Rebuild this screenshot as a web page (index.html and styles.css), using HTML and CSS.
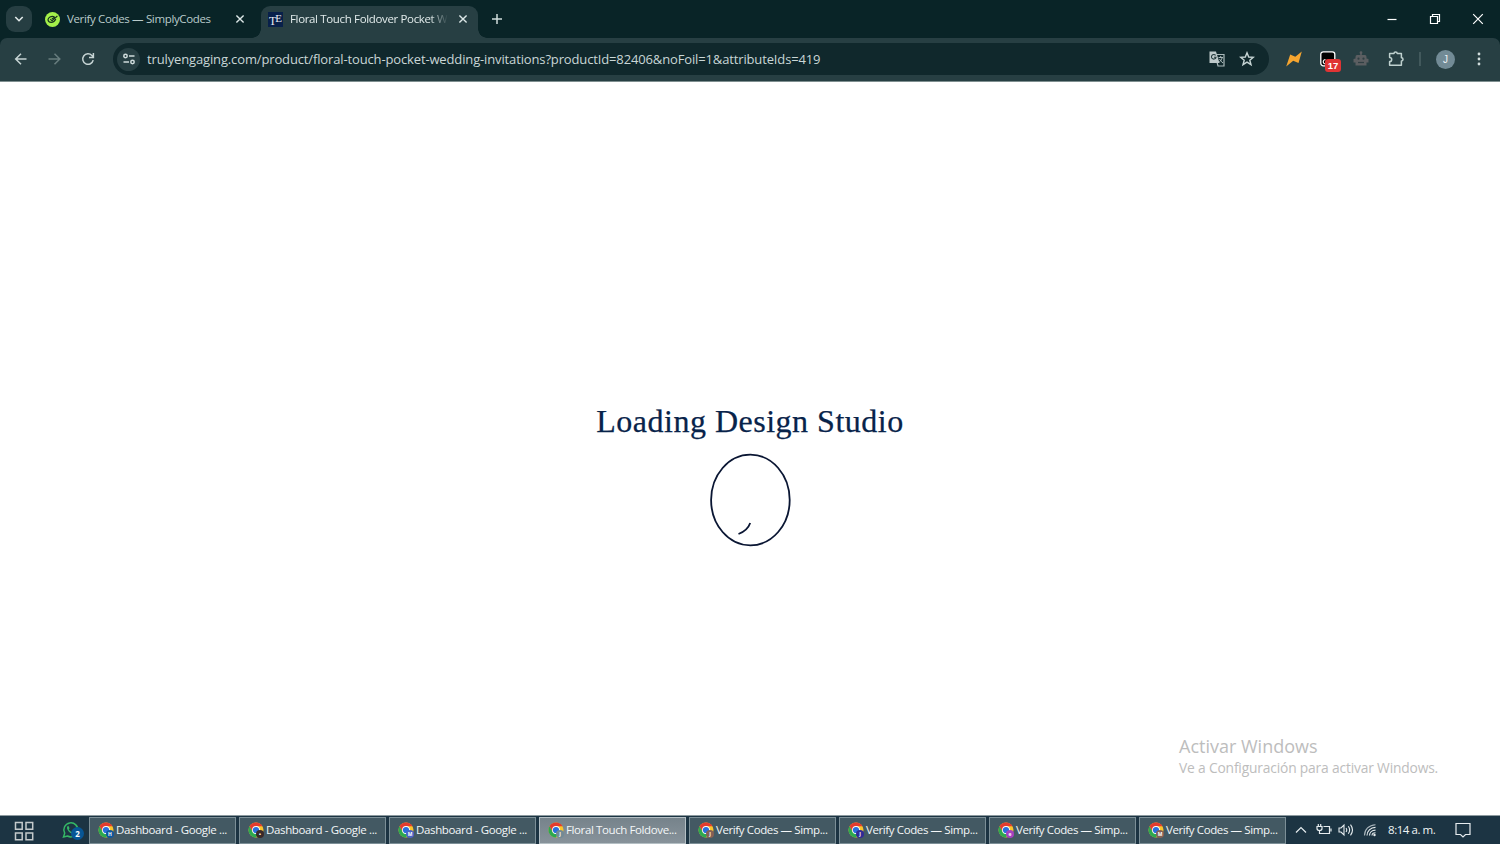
FILE: index.html
```html
<!DOCTYPE html>
<html lang="es">
<head>
<meta charset="utf-8">
<title>Floral Touch Foldover Pocket Wedding Invitations</title>
<link rel="stylesheet" href="styles.css">
</head>
<body>
<svg class="defs" aria-hidden="true">
  <symbol id="chrome" viewBox="0 0 16 16">
    <circle cx="8" cy="8" r="7.5" fill="#fbc52c"/>
    <path d="M1.5 4.2A7.5 7.5 0 0 1 14.5 4.2H8L4.7 9.9Z" fill="#e33b2e"/>
    <path d="M1.5 4.2A7.5 7.5 0 0 0 7.9 15.5L11.3 9.9H4.7Z" fill="#2da94f"/>
    <circle cx="8" cy="8" r="3.9" fill="#fff"/>
    <circle cx="8" cy="8" r="3.1" fill="#2b6fdc"/>
  </symbol>
  <symbol id="cross" viewBox="0 0 10 10"><path d="M1.4 1.4 8.6 8.6M8.6 1.4 1.4 8.6" fill="none" stroke="currentColor" stroke-width="1.4"/></symbol>
</svg>

<header class="tabstrip">
  <button class="tab-search"><svg width="10" height="10" viewBox="0 0 10 10"><path d="M1.300 3 5 6.700 8.700 3" fill="none" stroke="#e2eaea" stroke-width="1.600"/></svg></button>
  <div class="tab first">
    <svg class="favicon" viewBox="0 0 16 16"><circle cx="8" cy="8" r="8" fill="#a4f04a"/><path d="M10 5.100C6.500 4 3.300 5.800 3.200 8.300 3.300 11.700 9.500 12.300 11.500 7.500" fill="none" stroke="#17321e" stroke-width="1.300"/><path d="M5.700 7.500 7.500 9.400 13.200 4.300M7.300 7.400 10.500 5.300" fill="none" stroke="#17321e" stroke-width="1.200"/></svg>
    <span class="tab-title">Verify Codes — SimplyCodes</span>
    <svg class="tab-close"><use href="#cross"/></svg>
  </div>
  <div class="tab active">
    <span class="favicon te"><i>T</i><b>E</b></span>
    <span class="tab-title faded">Floral Touch Foldover Pocket We</span>
    <svg class="tab-close"><use href="#cross"/></svg>
  </div>
  <svg class="new-tab" viewBox="0 0 12 12"><path d="M6 1V11M1 6H11" stroke="#cfdcdc" stroke-width="1.500"/></svg>
  <div class="window-controls">
    <svg viewBox="0 0 12 12"><path d="M1.500 6.500H10.500" stroke="#fff" stroke-width="1.200"/></svg>
    <svg viewBox="0 0 12 12"><path d="M1.500 3.500H8.500V10.500H1.500ZM3.500 3.500V1.500H10.500V8.500H8.500" fill="none" stroke="#fff" stroke-width="1.200"/></svg>
    <svg viewBox="0 0 12 12"><path d="M1.200 1.200 10.800 10.800M10.800 1.200 1.200 10.800" stroke="#fff" stroke-width="1.200"/></svg>
  </div>
</header>

<div class="frame">
<nav class="toolbar">
  <div class="nav-buttons">
    <svg viewBox="0 0 16 16"><path d="M13.500 8H3M8 2.700 2.700 8 8 13.300" fill="none" stroke="#c6d4d4" stroke-width="1.500"/></svg>
    <svg viewBox="0 0 16 16"><path d="M1.500 8H12.500M7.500 2.700 12.800 8 7.500 13.300" fill="none" stroke="#687d7e" stroke-width="1.500"/></svg>
    <svg viewBox="0 0 16 16"><path d="M13.200 9.200A5.300 5.300 0 1 1 11.900 4.400L13.300 5.900M13.400 2V6.400H9" fill="none" stroke="#c6d4d4" stroke-width="1.500"/></svg>
  </div>
  <div class="omnibox">
    <span class="site-info"><svg viewBox="0 0 14 14"><g fill="none" stroke="#d0dcdc" stroke-width="1.500"><circle cx="3.500" cy="4" r="1.700"/><path d="M7 4H12.500M1.500 10H7"/><circle cx="10.500" cy="10" r="1.700"/></g></svg></span>
    <span class="url">trulyengaging.com/product/floral-touch-pocket-wedding-invitations?productId=82406&amp;noFoil=1&amp;attributeIds=419</span>
    <svg class="translate" viewBox="0 0 16 16"><path d="M6 3.500H15V15H9Z" fill="none" stroke="#aab9ba" stroke-width="1.200"/><path d="M.5.500H7L10.500 12H.5Z" fill="#bdc9ca"/><path d="M6.600 4.400A2.300 2.300 0 1 0 7 6.300H5" fill="none" stroke="#243a3d" stroke-width="1.100"/><path d="M9.500 6.500H14M11.700 5V6.500M13.200 6.700C12.500 9 11.500 10.200 10.300 11M10.500 8C11.500 9.700 12.500 11 14 12" fill="none" stroke="#aab9ba"/></svg>
    <svg class="star" viewBox="0 0 16 16"><path d="M8 1.800 9.700 6 14.300 6.300 10.800 9.200 12 13.700 8 11.200 4 13.700 5.200 9.200 1.700 6.300 6.300 6Z" fill="none" stroke="#c6d4d4" stroke-width="1.400"/></svg>
  </div>
  <div class="extensions">
    <svg viewBox="0 0 16 16"><path d="M.2 15.400 4.200 3.500 9.300 5.800 15.800.6 12.500 12 7.200 9.700Z" fill="#f6a52f"/></svg>
    <span class="ext-badge"><svg viewBox="0 0 16 16"><rect x=".8" y=".8" width="14" height="14" rx="2.500" fill="#000" stroke="#fff" stroke-width="1.300"/><path d="M5.500 8.500A2 2 0 1 0 5.500 13" fill="none" stroke="#fff" stroke-width="1.200"/></svg><b>17</b></span>
    <svg class="robot" viewBox="0 0 16 16"><path d="M7.200 1H8.800V4H12Q13.500 4 13.500 6V7.500L15.500 8V11.500H13.500V14.500H2.500V11.500H.5V8L2.500 7.500V6Q2.500 4 4 4H7.200Z" fill="#5b5e61"/><circle cx="8" cy="1.700" r="1.400" fill="#5b5e61"/><circle cx="5.500" cy="7.700" r="1.100" fill="#303f43"/><circle cx="10.500" cy="7.700" r="1.100" fill="#303f43"/><path d="M5 11.500H11" stroke="#303f43" stroke-width="1.200"/></svg>
    <svg viewBox="0 0 16 16"><path d="M1.600 2.500H6A1.600 1.600 0 0 1 9.200 2.500H13.400V6.700A1.600 1.600 0 0 1 13.400 9.900V14.200H1.600V10.600A2.100 2.100 0 0 0 1.600 6.400Z" fill="none" stroke="#bfd1cf" stroke-width="1.500" stroke-linejoin="round"/></svg>
    <span class="divider"></span>
    <span class="avatar">J</span>
    <svg class="menu" viewBox="0 0 4 16"><g fill="#d0dcdc"><circle cx="2" cy="3" r="1.400"/><circle cx="2" cy="8" r="1.400"/><circle cx="2" cy="13" r="1.400"/></g></svg>
  </div>
</nav>
</div>

<main class="page">
  <h1>Loading Design Studio</h1>
  <svg class="loader" viewBox="0 0 82 94"><ellipse cx="41.400" cy="47" rx="39.300" ry="45.300" fill="none" stroke="#0a1633" stroke-width="1.800"/><path d="M41.200 70C39.500 75 36 78.500 29.500 81" fill="none" stroke="#0a1633" stroke-width="1.800"/></svg>
  <aside class="activation"><p class="big">Activar Windows</p><p class="small">Ve a Configuración para activar Windows.</p></aside>
</main>

<footer class="taskbar">
  <svg class="start" viewBox="0 0 20 20"><g fill="none" stroke="#c4cacc" stroke-width="1.500"><path d="M1.500 1.500H8.200V8.200H1.500ZM12 1.500H18.700V8.200H12ZM1.500 12H8.200V18.700H1.500ZM12 12H18.700V18.700H12Z"/></g></svg>
  <span class="whatsapp"><svg viewBox="0 0 18 18"><path d="M1.500 16 2.700 12.200A7 7 0 1 1 5.500 15Z" fill="none" stroke="#35b866" stroke-width="1.500"/><path d="M6.300 4.800 7.600 7.200 6.800 8.200C7.500 9.700 8.500 10.500 10 11.100L11 10.200 13.200 11.300C12.700 13 11 13.200 9.500 12.500 7 11.500 5.500 9.300 5 7.300 4.900 6 5.500 5 6.300 4.800Z" fill="#35b866"/></svg><b>2</b></span>
  <div class="tasks">
    <div class="task"><span class="app"><svg><use href="#chrome"/></svg><i class="p-blue">H</i></span><span class="label dash">Dashboard - Google ...</span></div>
    <div class="task"><span class="app"><svg><use href="#chrome"/></svg><i class="p-dark">•</i></span><span class="label dash">Dashboard - Google ...</span></div>
    <div class="task"><span class="app"><svg><use href="#chrome"/></svg><i class="p-indigo">M</i></span><span class="label dash">Dashboard - Google ...</span></div>
    <div class="task current"><span class="app"><svg><use href="#chrome"/></svg><i class="p-slate">J</i></span><span class="label">Floral Touch Foldove...</span></div>
    <div class="task"><span class="app"><svg><use href="#chrome"/></svg><i class="p-brown">J</i></span><span class="label">Verify Codes — Simp...</span></div>
    <div class="task"><span class="app"><svg><use href="#chrome"/></svg><i class="p-navy">J</i></span><span class="label">Verify Codes — Simp...</span></div>
    <div class="task"><span class="app"><svg><use href="#chrome"/></svg><i class="p-purple">e</i></span><span class="label">Verify Codes — Simp...</span></div>
    <div class="task"><span class="app"><svg><use href="#chrome"/></svg><i class="p-brown">M</i></span><span class="label">Verify Codes — Simp...</span></div>
  </div>
  <div class="tray">
    <svg class="chev" viewBox="0 0 12 12"><path d="M1 8.500 6 3.500 11 8.500" fill="none" stroke="#e6ecef" stroke-width="1.200"/></svg>
    <svg class="battery" viewBox="0 0 16 14"><path d="M7.500 3.500H13.500V10.500H4.500M15 5.500V8.500M1 3.500H6V5.500Q6 7.500 3.500 7.500 1 7.500 1 5.500ZM2.300 1V3.500M4.700 1V3.500M3.500 7.500V10.500H5" fill="none" stroke="#e6ecef" stroke-width="1.200"/></svg>
    <svg class="volume" viewBox="0 0 16 14"><path d="M1 5H3L6 2V12L3 9H1ZM8 5Q9.500 7 8 9M10.300 3.300Q13 7 10.300 10.700M12.500 1.700Q16.500 7 12.500 12.300" fill="none" stroke="#e6ecef" stroke-width="1.100"/></svg>
    <svg class="wifi" viewBox="0 0 14 14"><g fill="none" stroke="#e6ecef" stroke-width="1.100"><path d="M1.500 12.500C1.500 6.500 6 2 12.500 1.700" opacity=".7"/><path d="M4 12.500C4 8 7.500 4.500 12.500 4.400M6.500 12.500C6.500 9.500 9 7.200 12.500 7.100M9 12.500C9 11 10.500 9.700 12.500 9.700"/></g><circle cx="11.500" cy="12" r="1.200" fill="#e6ecef"/></svg>
    <span class="clock">8:14 a. m.</span>
    <svg class="notice" viewBox="0 0 16 16"><path d="M1 1.500H15V12.500H10.500L8 15 5.500 12.500H1Z" fill="none" stroke="#e6ecef" stroke-width="1.200"/></svg>
  </div>
</footer>
</body>
</html>
```

FILE: styles.css
```css
* { box-sizing: border-box; }
body { margin: 0; width: 1500px; height: 844px; display: flex; flex-direction: column; overflow: hidden; background: #fff; font-family: "Open Sans", "Noto Sans", sans-serif; }
svg { display: block; flex: none; }
.defs { position: absolute; width: 0; height: 0; }

.tabstrip { height: 38px; flex: none; display: flex; align-items: flex-start; background: #092427; padding-left: 6px; }
.tab-search { width: 26px; height: 26px; margin: 6px 4px 0 0; padding: 0; border: 0; border-radius: 9px; background: #263e42; display: grid; place-items: center; }
.tab { height: 32px; margin-top: 6px; width: 225px; padding: 0 11px 6px 9px; display: flex; align-items: center; color: #b9cbcb; position: relative; }
.tab.first { padding-right: 16px; }
.favicon { width: 15px; height: 15px; flex: none; }
.tab-title { width: 158px; margin-left: 7px; font-size: 11.500px; letter-spacing: -.35px; line-height: 20px; white-space: nowrap; }
.tab-close { width: 10px; height: 10px; margin-left: auto; color: #dce7e7; }
.tab.active { width: 217px; padding: 0 10px 6px 7px; background: #273f43; border-radius: 9px 9px 0 0; color: #e2ebeb; }
.tab.active::before, .tab.active::after { content: ""; position: absolute; bottom: 0; width: 9px; height: 9px; }
.tab.active::before { left: -9px; background: radial-gradient(circle at 0 0, transparent 8.500px, #273f43 9px); }
.tab.active::after { right: -9px; background: radial-gradient(circle at 100% 0, transparent 8.500px, #273f43 9px); }
.faded { -webkit-mask-image: linear-gradient(90deg, #000 140px, transparent 158px); mask-image: linear-gradient(90deg, #000 140px, transparent 158px); }
.te { background: #08204a; display: flex; justify-content: center; font: 12px/12px "Liberation Serif", serif; color: #e6eaf0; }
.te i, .te b { font-style: normal; font-weight: 400; }
.te i { line-height: 18px; }
.te b { font-size: 11px; margin-left: -1px; }
.new-tab { width: 12px; height: 12px; margin: 13px 0 0 13px; }
.window-controls { margin: 13px 16px 0 auto; display: flex; gap: 31px; }
.window-controls svg { width: 12px; height: 12px; }

.frame { flex: none; background: #092427; }
.toolbar { height: 44px; display: flex; align-items: center; background: #273f43; border-bottom: 1px solid #7f8f90; border-radius: 7px 7px 0 0; padding: 0 19px 1px 13px; }
.nav-buttons { display: flex; gap: 17.500px; width: 100px; }
.nav-buttons svg { width: 16px; height: 16px; }
.omnibox { width: 1156px; height: 32px; border-radius: 16px; background: #10282c; display: flex; align-items: center; padding: 0 14px 0 4px; }
.site-info { width: 23px; height: 23px; border-radius: 50%; background: #273f43; display: grid; place-items: center; }
.site-info svg { width: 14px; height: 14px; }
.url { flex: 1; margin-left: 7px; font-size: 13px; letter-spacing: -.138px; color: #c9d6d6; white-space: nowrap; line-height: 20px; }
.translate { width: 16px; height: 16px; margin-right: 14px; }
.star { width: 16px; height: 16px; }
.extensions { display: flex; align-items: center; flex: 1; margin-left: 17px; gap: 18px; }
.extensions > svg { width: 16px; height: 16px; }
.extensions > .robot { margin: 0 1px 0 -1px; }
.ext-badge { position: relative; width: 16px; height: 16px; }
.ext-badge svg { width: 16px; height: 16px; }
.ext-badge b { position: absolute; left: 5px; top: 8px; width: 16px; height: 13px; border-radius: 3px; background: #df3434; color: #fff; font: 700 9.500px/13px "Liberation Sans", sans-serif; text-align: center; }
.divider { width: 2px; height: 14px; background: #42595c; margin-left: -3px; }
.avatar { width: 19px; height: 19px; border-radius: 50%; background: #728b96; color: #edf2f4; font: 10px/19px "Liberation Sans", sans-serif; text-align: center; margin-left: -3px; }
.extensions > .menu { width: 4px; margin-left: 4px; }

.page { flex: 1; display: flex; flex-direction: column; align-items: center; position: relative; padding-top: 320px; }
h1 { margin: 0; font: 400 32px/38px "Liberation Serif", serif; color: #08234a; letter-spacing: .5px; -webkit-text-stroke: .25px #08234a; white-space: nowrap; }
.loader { width: 82px; height: 94px; margin-top: 13px; }
.activation { position: absolute; left: 1179px; top: 652px; color: #bdbdbd; white-space: nowrap; }
.activation p { margin: 0; }
.big { font-size: 18px; line-height: 24px; }
.small { font-size: 13.800px; letter-spacing: -.17px; line-height: 19px; }

.taskbar { height: 29px; flex: none; display: flex; align-items: center; background: #1c3443; border-top: 1px solid #8d9a9f; padding-left: 14px; }
.start { width: 20px; height: 20px; margin-top: 2px; }
.whatsapp { position: relative; width: 18px; height: 18px; margin: 0 9px 0 28px; }
.whatsapp svg { width: 18px; height: 18px; }
.whatsapp b { position: absolute; left: 9px; top: 6px; width: 13px; height: 13px; border-radius: 50%; background: #075696; color: #fff; font-size: 8px; line-height: 13px; text-align: center; }
.tasks { display: flex; gap: 3px; }
.task { width: 147px; height: 27px; display: flex; align-items: center; background: #435963; border: 1px solid #7c8f97; padding-left: 8px; color: #f4f7f8; }
.task.current { background: linear-gradient(#76838b, #87929a); border-color: #b4bfc4; }
.app { position: relative; width: 16px; height: 16px; flex: none; }
.app svg { width: 16px; height: 16px; }
.app i { position: absolute; left: 8px; top: 8px; width: 8px; height: 8px; border-radius: 50%; font: 700 5px/8px "Open Sans", sans-serif; text-align: center; color: #fff; }
.p-blue { background: #10579c; } .p-dark { background: #3a2928; } .p-indigo { background: #4c64c5; } .p-slate { background: #728b96; }
.p-brown { background: #866054; } .p-navy { background: #312b97; } .p-purple { background: #a640c0; }
.label { margin-left: 2px; font-size: 11.500px; letter-spacing: -.39px; line-height: 18px; white-space: nowrap; }
.label.dash { letter-spacing: -.36px; }
.tray { display: flex; align-items: center; margin-left: 9px; }
.chev { width: 12px; height: 12px; }
.battery { width: 16px; height: 14px; margin-left: 9px; }
.volume { width: 16px; height: 14px; margin-left: 6px; }
.wifi { width: 14px; height: 14px; margin-left: 9px; }
.clock { width: 52px; margin-left: 11px; font-size: 11.500px; letter-spacing: -.45px; color: #f0f4f5; white-space: nowrap; line-height: 18px; }
.notice { width: 16px; height: 16px; margin-left: 15px; }
```
